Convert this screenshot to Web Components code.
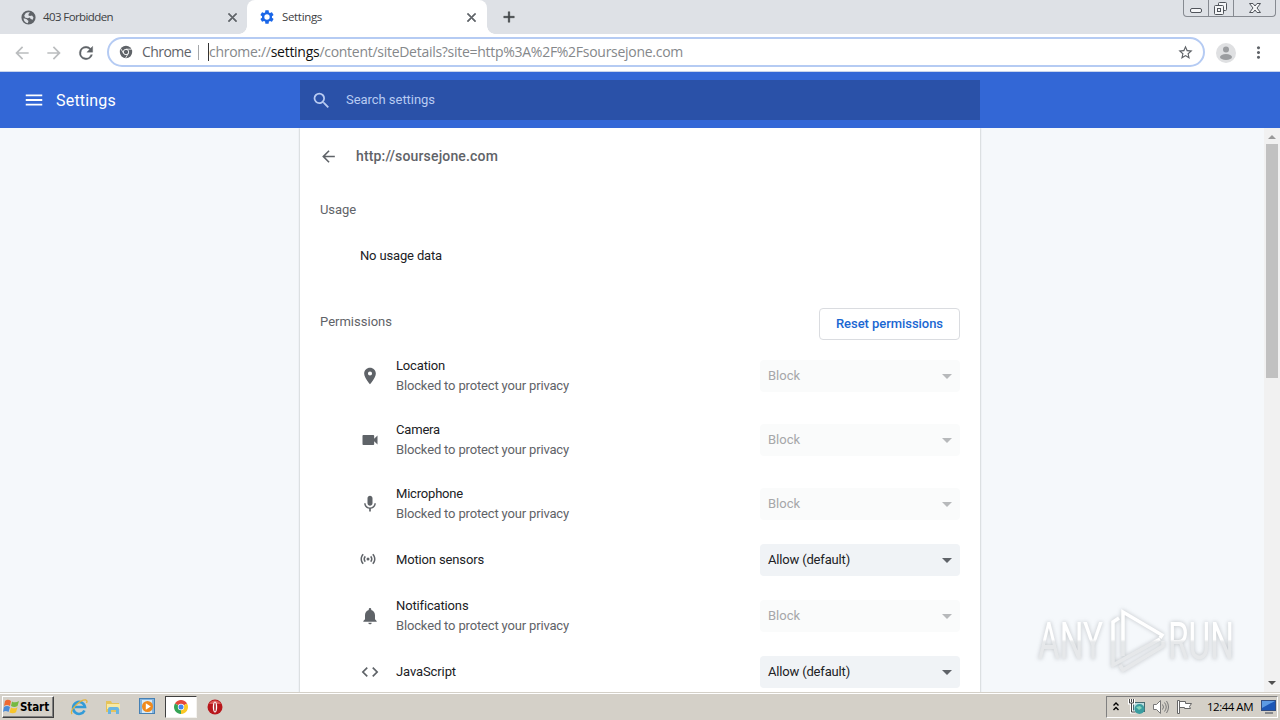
<!DOCTYPE html>
<html lang="en">
<head>
<meta charset="utf-8">
<title>Settings</title>
<style>
  html, body {
    margin: 0;
    width: 1280px;
    height: 720px;
    overflow: hidden;
  }

  body {
    display: flex;
    flex-direction: column;
    font-family: Roboto, "Liberation Sans", sans-serif;
    font-size: 13px;
    background: #fff;
  }
</style>
</head>
<body>
<tab-strip></tab-strip>
<nav-toolbar></nav-toolbar>
<settings-header></settings-header>
<settings-view>
  <settings-page>
    <permission-row icon="location" label="Location" label-width="49" blocked></permission-row>
    <permission-row icon="camera" label="Camera" label-width="44" blocked></permission-row>
    <permission-row icon="mic" label="Microphone" label-width="67" blocked></permission-row>
    <permission-row icon="sensors" label="Motion sensors" label-width="88"></permission-row>
    <permission-row icon="bell" label="Notifications" label-width="72" blocked></permission-row>
    <permission-row icon="code" label="JavaScript" label-width="60"></permission-row>
  </settings-page>
</settings-view>
<task-bar></task-bar>
<water-mark></water-mark>

<script>
const ICONS = {
  back: "M20 11H7.83l5.59-5.59L12 4l-8 8 8 8 1.41-1.41L7.83 13H20v-2z",
  forward: "M12 4l-1.41 1.41L16.17 11H4v2h12.17l-5.58 5.59L12 20l8-8z",
  reload: "M17.65 6.35A7.96 7.96 0 0 0 12 4a8 8 0 1 0 7.73 10h-2.08A6 6 0 1 1 12 6c1.66 0 3.14.69 4.22 1.78L13 11h7V4l-2.35 2.35z",
  close: "M19 6.41L17.59 5 12 10.59 6.41 5 5 6.41 10.59 12 5 17.59 6.41 19 12 13.41 17.59 19 19 17.59 13.41 12z",
  plus: "M19 13h-6v6h-2v-6H5v-2h6V5h2v6h6v2z",
  star: "M22 9.24l-7.19-.62L12 2 9.19 8.63 2 9.24l5.46 4.73L5.82 21 12 17.27 18.18 21l-1.63-7.03L22 9.24zM12 15.4l-3.76 2.27 1-4.28-3.32-2.88 4.38-.38L12 6.1l1.71 4.04 4.38.38-3.32 2.88 1 4.28L12 15.4z",
  more: "M12 8c1.1 0 2-.9 2-2s-.9-2-2-2-2 .9-2 2 .9 2 2 2zm0 2c-1.1 0-2 .9-2 2s.9 2 2 2 2-.9 2-2-.9-2-2-2zm0 6c-1.1 0-2 .9-2 2s.9 2 2 2 2-.9 2-2-.9-2-2-2z",
  menu: "M3 18h18v-2H3v2zm0-5h18v-2H3v2zm0-7v2h18V6H3z",
  search: "M15.5 14h-.79l-.28-.27A6.47 6.47 0 0 0 16 9.5 6.5 6.5 0 1 0 9.5 16c1.61 0 3.09-.59 4.23-1.57l.27.28v.79l5 4.99L20.49 19l-4.99-5zm-6 0C7.01 14 5 11.99 5 9.5S7.01 5 9.5 5 14 7.01 14 9.5 11.99 14 9.5 14z",
  globe: "M12 2a10 10 0 1 0 0 20 10 10 0 0 0 0-20zM8 6c2-1.500 4-1.500 6-1l-2 2v2l2 1 3-1 2 3-1 3-3-1-1-2-3 1-4-1-1-3 2-3zM5 13l4 1 3 3-1 3c-3-.5-6-3-6-7z",
  gear: "M19.43 12.98c.04-.32.07-.64.07-.98s-.03-.66-.07-.98l2.11-1.65c.19-.15.24-.42.12-.64l-2-3.460c-.12-.22-.39-.3-.61-.22l-2.49 1c-.52-.4-1.080-.73-1.690-.98l-.38-2.650C14.460 2.180 14.250 2 14 2h-4c-.25 0-.46.18-.49.42l-.38 2.650c-.61.25-1.170.59-1.690.98l-2.490-1c-.23-.09-.49 0-.61.22l-2 3.460c-.13.22-.07.49.12.64l2.110 1.650c-.04.32-.07.65-.07.98s.03.66.07.98l-2.110 1.650c-.19.15-.24.42-.12.64l2 3.460c.12.22.39.3.61.22l2.490-1c.52.4 1.080.73 1.690.98l.38 2.650c.03.24.24.42.49.42h4c.25 0 .46-.18.49-.42l.38-2.650c.61-.25 1.170-.59 1.690-.98l2.490 1c.23.09.49 0 .61-.22l2-3.460c.12-.22.07-.49-.12-.64l-2.110-1.650zM12 16a4 4 0 1 1 0-8 4 4 0 0 1 0 8z",
  location: "M12 2C8.13 2 5 5.13 5 9c0 5.25 7 13 7 13s7-7.75 7-13c0-3.87-3.13-7-7-7zm0 9.5a2.5 2.5 0 1 1 0-5 2.5 2.5 0 0 1 0 5z",
  camera: "M17 10.5V7c0-.55-.45-1-1-1H4c-.55 0-1 .45-1 1v10c0 .55.45 1 1 1h12c.55 0 1-.45 1-1v-3.500l4 4v-11l-4 4z",
  mic: "M12 14c1.660 0 3-1.340 3-3V5c0-1.660-1.340-3-3-3S9 3.340 9 5v6c0 1.660 1.340 3 3 3zm5.300-3c0 3-2.540 5.100-5.300 5.100S6.700 14 6.700 11H5c0 3.410 2.720 6.230 6 6.720V21h2v-3.280c3.280-.48 6-3.300 6-6.720h-1.700z",
  bell: "M12 22c1.100 0 2-.9 2-2h-4a2 2 0 0 0 2 2zm6-6v-5c0-3.070-1.640-5.640-4.500-6.320V4a1.500 1.500 0 0 0-3 0v.68C7.630 5.360 6 7.920 6 11v5l-2 2v1h16v-1l-2-2z",
  code: "M9.400 16.600L4.800 12l4.600-4.600L8 6l-6 6 6 6 1.400-1.400zm5.200 0l4.600-4.600-4.600-4.600L16 6l6 6-6 6-1.400-1.400z",
  sensors: "M7.760 16.240C6.670 15.160 6 13.660 6 12s.67-3.160 1.760-4.240l1.420 1.420C8.450 9.900 8 10.900 8 12s.45 2.100 1.170 2.830l-1.410 1.410zm8.480 0C17.330 15.160 18 13.660 18 12s-.67-3.160-1.760-4.240l-1.420 1.420C15.550 9.900 16 10.900 16 12s-.45 2.100-1.170 2.830l1.410 1.410zM12 10a2 2 0 1 0 0 4 2 2 0 0 0 0-4zm8 2c0 2.210-.9 4.210-2.350 5.650l1.420 1.420C20.880 17.260 22 14.760 22 12s-1.120-5.260-2.930-7.070l-1.420 1.420C19.100 7.790 20 9.790 20 12zM6.350 6.350L4.930 4.930C3.120 6.740 2 9.240 2 12s1.120 5.260 2.930 7.070l1.420-1.420C4.900 16.210 4 14.210 4 12s.9-4.210 2.350-5.650z"
};

class BaseElement extends HTMLElement {
  constructor() {
    super();
    this.attachShadow({ mode: "open" });
  }

  connectedCallback() {
    this.shadowRoot.innerHTML = `<style>${this.constructor.styles}</style>${this.template()}`;
  }
}

class UiIcon extends BaseElement {
  static get styles() {
    return /* css */`
      :host { display: block; flex: none; }
      svg { display: block; fill: currentColor; }
    `;
  }

  template() {
    const size = this.getAttribute("size") || 20;
    return /* html */`
    <svg width="${size}" height="${size}" viewBox="0 0 24 24">
      <path fill-rule="evenodd" d="${ICONS[this.getAttribute("name")]}"/>
    </svg>`;
  }
}

class TabStrip extends BaseElement {
  static get styles() {
    return /* css */`
      :host {
        display: flex;
        height: 34px;
        flex: none;
        background: #dee1e6;
        font: 11.5px "Open Sans", "Noto Sans", sans-serif;
        color: #3c4043;
      }
      .tab {
        display: flex;
        align-items: center;
        box-sizing: border-box;
        height: 34px;
        width: 247px;
        padding: 0 7px 0 20px;
      }
      .tab.active {
        width: 240px;
        padding: 0 8px 0 12px;
        background: #fff;
        border-radius: 8px 8px 0 0;
        position: relative;
      }
      .tab.active::before,
      .tab.active::after {
        content: "";
        position: absolute;
        bottom: 0;
        width: 8px;
        height: 8px;
      }
      .tab.active::before {
        left: -8px;
        background: radial-gradient(circle at 0 0, transparent 7.5px, #fff 8px);
      }
      .tab.active::after {
        right: -8px;
        background: radial-gradient(circle at 100% 0, transparent 7.5px, #fff 8px);
      }
      fit-text { margin-left: 7px; margin-bottom: 2px; }
      .close { margin-left: auto; color: #5f6368; stroke: #5f6368; }
      .gear { color: #1a66e8; }
      .plus { margin: 8px 0 0 13px; color: #3c4043; stroke: #3c4043; stroke-width: .6; }
      .controls {
        display: flex;
        box-sizing: border-box;
        width: 93px;
        height: 17px;
        margin: 0 4px 0 auto;
        border: 1px solid #868a91;
        border-top: 0;
        border-radius: 0 0 4px 4px;
      }
      .controls svg { display: block; }
    `;
  }

  template() {
    return /* html */`
    <div class="tab">
      <ui-icon name="globe" size="17" style="color:#5f6368"></ui-icon>
      <fit-text w="70" style="margin-left:6px">403 Forbidden</fit-text>
      <ui-icon class="close" name="close" size="15"></ui-icon>
    </div>
    <div class="tab active">
      <ui-icon class="gear" name="gear" size="16"></ui-icon>
      <fit-text w="40">Settings</fit-text>
      <ui-icon class="close" name="close" size="15"></ui-icon>
    </div>
    <ui-icon class="plus" name="plus" size="18"></ui-icon>
    <div class="controls">
      <svg width="91" height="16" fill="#f5f6f8" stroke="#50545b">
        <path d="M24.500 0v16M49.500 0v16" stroke="#868a91"/>
        <rect x="6.500" y="8.500" width="11" height="4" rx="1.500"/>
        <rect x="34.500" y="2.500" width="8" height="8" rx="1"/>
        <rect x="30.500" y="5.500" width="9" height="9" rx="1"/>
        <rect x="33.500" y="8.500" width="3" height="3"/>
        <path d="M65.500 3.500h3.500l2 2.500 2-2.500h3.500l-3.500 4.500 3.500 4.500h-3.500l-2-2.500-2 2.500h-3.500l3.500-4.500z"/>
      </svg>
    </div>`;
  }
}

class NavToolbar extends BaseElement {
  static get styles() {
    return /* css */`
      :host {
        display: flex;
        align-items: center;
        box-sizing: border-box;
        height: 38px;
        flex: none;
        padding: 0 12px;
        background: #fff;
        border-bottom: 1px solid #c9d4ec;
        font: 14px "Open Sans", "Noto Sans", sans-serif;
        color: #5f6368;
      }
      .off { color: #bbbdbf; }
      .omnibox {
        display: flex;
        align-items: center;
        box-sizing: border-box;
        width: 1098px;
        height: 30px;
        margin-left: 12px;
        margin-top: -1px;
        padding: 0 9px 0 10px;
        border: 2px solid #b5cbf3;
        border-radius: 15px;
      }
      .omnibox fit-text { margin-bottom: 1px; }
      .site { margin-left: 9px; }
      .divider { width: 1px; height: 15px; margin: 0 9px 0 7px; background: #a5a7aa; }
      .caret { width: 1px; height: 18px; background: #333; }
      .url { color: #85888b; }
      .url b { font-weight: 400; color: #111; }
      .star { margin-left: auto; }
      .avatar { display: block; margin-left: 11px; }
      .more { margin-left: 13px; }
    `;
  }

  template() {
    return /* html */`
    <ui-icon class="off" name="back"></ui-icon>
    <ui-icon class="off" name="forward" style="margin-left:12px"></ui-icon>
    <ui-icon name="reload" style="margin-left:12px;margin-right:-1px;stroke:currentColor;stroke-width:.4"></ui-icon>
    <div class="omnibox">
      <svg width="14" height="14" viewBox="0 0 14 14">
        <circle cx="7" cy="7" r="6.200" fill="#5f6368"/>
        <circle cx="7" cy="7" r="2.700" fill="#5f6368" stroke="#fff" stroke-width=".9"/>
        <path d="M7 4.200h5.800M4.600 8.400L1.700 3.500M9.400 8.400L6.500 13.200" stroke="#fff" stroke-width=".8"/>
      </svg>
      <fit-text class="site" w="49">Chrome</fit-text>
      <div class="divider"></div>
      <div class="caret"></div>
      <fit-text class="url" w="474">chrome://<b>settings</b>/content/siteDetails?site=http%3A%2F%2Fsoursejone.com</fit-text>
      <ui-icon class="star" name="star" size="17"></ui-icon>
    </div>
    <svg class="avatar" width="20" height="20">
      <circle cx="10" cy="10" r="10" fill="#dfe0e2"/>
      <circle cx="10" cy="6.500" r="3" fill="#9b9da0"/>
      <ellipse cx="10" cy="14" rx="6" ry="3" fill="#9b9da0"/>
    </svg>
    <ui-icon class="more" name="more" size="19"></ui-icon>`;
  }
}

class SettingsHeader extends BaseElement {
  static get styles() {
    return /* css */`
      :host {
        display: flex;
        align-items: center;
        height: 56px;
        flex: none;
        background: #3367d6;
        color: #fff;
      }
      .left {
        display: flex;
        align-items: center;
        box-sizing: border-box;
        width: 300px;
        padding-left: 23px;
        gap: 11px;
        font-size: 16px;
      }
      .search {
        display: flex;
        align-items: center;
        box-sizing: border-box;
        width: 680px;
        height: 40px;
        padding-left: 11px;
        gap: 14px;
        background: #2a51a8;
        color: #b8cbf2;
      }
      .search fit-text { margin-bottom: 2px; }
    `;
  }

  template() {
    return /* html */`
    <div class="left">
      <ui-icon name="menu" size="22"></ui-icon>
      <fit-text w="60">Settings</fit-text>
    </div>
    <div class="search">
      <ui-icon name="search" size="21"></ui-icon>
      <fit-text w="89">Search settings</fit-text>
    </div>`;
  }
}

class SettingsView extends BaseElement {
  static get styles() {
    return /* css */`
      :host {
        display: flex;
        height: 564px;
        flex: none;
        padding-left: 300px;
        background: #f5f8fb;
        overflow: hidden;
      }
      .scrollbar {
        display: flex;
        flex-direction: column;
        align-items: center;
        width: 16px;
        margin-left: auto;
        background: #f1f1f1;
      }
      .thumb { width: 12px; height: 234px; background: #c1c1c1; }
      svg { display: block; }
      .down { margin-top: auto; }
    `;
  }

  template() {
    return /* html */`
    <slot></slot>
    <div class="scrollbar">
      <svg width="16" height="16"><path d="M4 11l4-4 4 4z" fill="#999"/></svg>
      <div class="thumb"></div>
      <svg class="down" width="16" height="16"><path d="M4 5h8l-4 4z" fill="#505050"/></svg>
    </div>`;
  }
}

class SettingsPage extends BaseElement {
  static get styles() {
    return /* css */`
      :host {
        display: block;
        box-sizing: border-box;
        width: 680px;
        height: 620px;
        padding: 0 20px 0 20px;
        background: #fff;
        box-shadow: 0 0 2px rgba(60, 64, 67, .4);
        color: #5f6368;
      }
      .title {
        display: flex;
        align-items: center;
        height: 56px;
        gap: 20px;
        margin-left: -1px;
        font-size: 14px;
        font-weight: 500;
      }
      .title ui-icon { width: 17px; }
      .usage { display: flex; align-items: center; height: 44px; padding-top: 4px; }
      .data {
        display: flex;
        align-items: center;
        height: 48px;
        padding-left: 40px;
        margin-bottom: 24px;
        color: #202124;
      }
      .usage fit-text,
      .data fit-text,
      .reset fit-text { margin-bottom: 2px; }
      .heading { display: flex; justify-content: space-between; height: 40px; }
      .heading > fit-text { margin-top: 10px; }
      .reset {
        display: flex;
        align-items: center;
        justify-content: center;
        box-sizing: border-box;
        width: 141px;
        height: 32px;
        margin-top: 4px;
        border: 1px solid #dadce0;
        border-radius: 4px;
        font-weight: 500;
        color: #1a67d2;
      }
    `;
  }

  template() {
    return /* html */`
    <div class="title"><ui-icon name="back" size="19"></ui-icon><fit-text w="142">http://soursejone.com</fit-text></div>
    <div class="usage"><fit-text w="36">Usage</fit-text></div>
    <div class="data"><fit-text w="82">No usage data</fit-text></div>
    <div class="heading">
      <fit-text w="72">Permissions</fit-text>
      <div class="reset"><fit-text w="107">Reset permissions</fit-text></div>
    </div>
    <slot></slot>`;
  }
}

class PermissionRow extends BaseElement {
  static get styles() {
    return /* css */`
      :host { display: flex; align-items: center; height: 48px; padding-left: 40px; color: #5f6368; }
      :host([blocked]) { height: 64px; }
      :host([icon="sensors"]) { padding-left: 39px; }
      :host([icon="sensors"]) ui-icon { width: 18px; margin-right: 3px; margin-bottom: 2px; }
      .text { display: flex; flex-direction: column; margin-left: 16px; line-height: 20px; }
      .label { color: #202124; }
      .select {
        display: flex;
        align-items: center;
        justify-content: space-between;
        box-sizing: border-box;
        width: 200px;
        height: 32px;
        margin-left: auto;
        padding: 0 8px;
        background: #f0f3f6;
        border-radius: 4px;
        color: #202124;
      }
      .select fit-text { margin-bottom: 2px; }
      :host([blocked]) .select { background: #fafbfb; color: #a6a7a9; }
      .arrow { fill: #5f6368; }
      :host([blocked]) .arrow { fill: #b7b9bb; }
    `;
  }

  template() {
    const blocked = this.hasAttribute("blocked");
    const icon = this.getAttribute("icon");
    return /* html */`
    <ui-icon name="${icon}" size="${icon === "sensors" ? 18 : 20}"></ui-icon>
    <div class="text">
      <fit-text class="label" w="${this.getAttribute("label-width")}">${this.getAttribute("label")}</fit-text>
      ${blocked ? `<fit-text w="173">Blocked to protect your privacy</fit-text>` : ""}
    </div>
    <div class="select">
      <fit-text w="${blocked ? 32 : 82}">${blocked ? "Block" : "Allow (default)"}</fit-text>
      <svg class="arrow" width="10" height="5"><path d="M0 0h10L5 5z"/></svg>
    </div>`;
  }
}

class TaskBar extends BaseElement {
  static get styles() {
    return /* css */`
      :host {
        display: flex;
        align-items: center;
        box-sizing: border-box;
        height: 28px;
        flex: none;
        padding: 0 2px;
        border-top: 1px solid #d4d0c8;
        background: #d4d0c8;
        box-shadow: inset 0 1px #fff;
        font: 11.5px "Open Sans", "Noto Sans", sans-serif;
        color: #000;
      }
      svg { display: block; }
      .start {
        display: flex;
        align-items: center;
        box-sizing: border-box;
        width: 52px;
        height: 22px;
        border: 1px solid;
        border-color: #fff #404040 #404040 #fff;
        box-shadow: inset -1px -1px #808080;
        font: bold 11.5px "DejaVu Sans Condensed", "DejaVu Sans", sans-serif;
      }
      .apps { display: flex; align-items: center; margin-left: 8px; }
      .app {
        display: flex;
        align-items: center;
        justify-content: center;
        box-sizing: border-box;
        width: 34px;
        height: 22px;
      }
      .app.active {
        width: 32px;
        margin: 0 1px;
        background: #fff;
        border: 1px solid;
        border-color: #404040 #f4f2ee #f4f2ee #404040;
      }
      .tray {
        display: flex;
        align-items: center;
        box-sizing: border-box;
        width: 172px;
        height: 22px;
        margin-left: auto;
        padding-left: 5px;
        border: 1px solid;
        border-color: #808080 #fff #fff #808080;
      }
      .tray fit-text { margin-bottom: 1px; }
    `;
  }

  template() {
    return /* html */`
    <div class="start">
      <svg width="17" height="17" viewBox="0 0 17 17">
        <path d="M2 3c2-2 4-1.500 6 0L7 8C5 6.500 3 6.500 1 8z" fill="#ef6a32"/>
        <path d="M9 3.500c2 1.200 4.500 1.200 7-.5l-1.500 5C12 9.500 10 9 8 8z" fill="#75b943"/>
        <path d="M1 9c2-1.500 4-1.500 6 0l-1.500 5c-2-1.500-4-1.300-5.500 0z" fill="#4a8bd8"/>
        <path d="M8 9.500c2 1.200 4 1.200 6.500-.3l-1.500 5c-2 1.500-4.500 1.300-6.500.3z" fill="#f7c52c"/>
      </svg>
      <fit-text w="29">Start</fit-text>
    </div>
    <div class="apps">
      <div class="app">
        <svg width="18" height="18" viewBox="0 0 18 18" fill="none">
          <path d="M14.500 12.500a6 6 0 1 1 .5-3.500H5" stroke="#329bd8" stroke-width="2.600"/>
          <path d="M2 16C-1 12 11 1 16 2c1.500.5 1 2 .5 3" stroke="#e3b33c" stroke-width="1.300"/>
        </svg>
      </div>
      <div class="app">
        <svg width="18" height="18" viewBox="0 0 18 18">
          <path d="M2 3h5l1 2h7v9H2z" fill="#e5c35b"/>
          <path d="M3 6h13v5H3z" fill="#f8e9a3"/>
          <path d="M4 16V11q0-2 2-2h7q2 0 2 2v5h-3v-4H7v4z" fill="#69b5e2"/>
        </svg>
      </div>
      <div class="app">
        <svg width="17" height="17" viewBox="0 0 17 17">
          <rect x=".5" y=".5" width="15" height="15" fill="#85b5df" stroke="#4580b4"/>
          <rect x="3" y="2" width="10" height="13" fill="#d8eaf8"/>
          <circle cx="8.500" cy="8.500" r="5.500" fill="#f08a1d"/>
          <path d="M6.800 5.300v6.400l5-3.200z" fill="#fff"/>
        </svg>
      </div>
      <div class="app active">
        <svg width="14" height="14" viewBox="0 0 14 14">
          <path d="M7 7L.94 3.500a7 7 0 0 1 12.120 0z" fill="#e4483b"/>
          <path d="M7 7L.94 3.500A7 7 0 0 0 7 14z" fill="#35a455"/>
          <path d="M7 7l6.060-3.500A7 7 0 0 1 7 14z" fill="#fbc824"/>
          <circle cx="7" cy="7" r="3.200" fill="#fff"/>
          <circle cx="7" cy="7" r="2.500" fill="#4385ee"/>
        </svg>
      </div>
      <div class="app">
        <svg width="16" height="16" viewBox="0 0 16 16">
          <circle cx="8" cy="8" r="7.500" fill="#b8161b"/>
          <path d="M2 5a7 7 0 0 1 12 0z" fill="#dc5a58"/>
          <ellipse cx="8" cy="8" rx="2.200" ry="5.500" fill="#fff"/>
          <ellipse cx="8" cy="8" rx=".8" ry="4.500" fill="#a31318"/>
        </svg>
      </div>
    </div>
    <div class="tray">
      <svg width="8" height="12" fill="none" stroke="#000" stroke-width="1.400"><path d="M1.500 4.500L4 2l2.500 2.500M1.500 9L4 6.500 6.500 9"/></svg>
      <svg width="18" height="18" viewBox="0 0 18 18" style="margin-left:8px">
        <rect x="5.500" y="4.500" width="11" height="9" fill="#b9dde0" stroke="#476b70"/>
        <path d="M1.500 1v4h4V1M3.500 1v13h4" fill="none" stroke="#fff" stroke-width="3"/>
        <path d="M1.500 1v4h4V1M3.500 5v9h4M3.500 1v3" fill="none" stroke="#444"/>
        <circle cx="11.500" cy="11" r="5" fill="#3a9da0"/>
        <path d="M8 9l4-1 2 2-3 2z" fill="#83d5bb"/>
      </svg>
      <svg width="17" height="16" viewBox="0 0 17 16" fill="none" stroke="#777" style="margin-left:6px">
        <path d="M1.500 5.500h3L8.500 1.500v13l-4-4h-3z" fill="#fff"/>
        <path d="M10.500 5.500q2 2.500 0 5M12.500 3.500q3.500 4.500 0 9M14.500 2q4 6 0 12"/>
      </svg>
      <svg width="17" height="16" viewBox="0 0 17 16" fill="#fff" stroke="#666" style="margin-left:7px">
        <path d="M1.500 1.500h2v13h-2zM3.500 2.500h6v2h6l-2 3 1 2H8.500v-1h-5z"/>
      </svg>
      <fit-text w="46" style="margin-left:14px">12:44 AM</fit-text>
      <svg width="16" height="15" viewBox="0 0 16 15" style="margin-left:8px">
        <rect x=".5" y="1.500" width="14" height="10" fill="#1d57b6" stroke="#344e80"/>
        <path d="M1 2h13L1 9z" fill="#5d9be4"/>
        <path d="M4 14h8" stroke="#6d7179" stroke-width="1.500"/>
      </svg>
    </div>`;
  }
}

// Sits over the page, so it is taken out of the flow
class WaterMark extends BaseElement {
  static get styles() {
    return /* css */`
      :host { display: block; position: absolute; left: 1030px; top: 600px; }
      svg { display: block; filter: drop-shadow(0 0 2px rgba(90, 95, 100, .35)); }
      text { font: 400 51px Roboto, sans-serif; }
    `;
  }

  template() {
    return /* html */`
    <svg width="240" height="84">
      <defs>
        <linearGradient id="fade" gradientUnits="userSpaceOnUse" x1="0" y1="8" x2="0" y2="72">
          <stop offset=".49" stop-color="#fff"/>
          <stop offset=".53" stop-color="#e6e8ea"/>
        </linearGradient>
      </defs>
      <g fill="url(#fade)">
        <text x="8" y="59" textLength="65" lengthAdjust="spacingAndGlyphs">ANY</text>
        <text x="138" y="59" textLength="66" lengthAdjust="spacingAndGlyphs">RUN</text>
      </g>
      <g fill="none" stroke="url(#fade)" stroke-width="3.500">
        <path d="M93 56V12l39 23-2 3"/>
        <path d="M89 18l-6 4v43l47-26"/>
        <path d="M90 65l3 5 40-24v-5"/>
      </g>
    </svg>`;
  }
}

// Tracks its text so the run comes out exactly `w` pixels wide
class FitText extends BaseElement {
  static get styles() {
    return /* css */`
      :host { display: inline-block; flex: none; white-space: nowrap; width: max-content; }
    `;
  }

  template() {
    return `<slot></slot>`;
  }

  connectedCallback() {
    super.connectedCallback();
    const extra = Number(this.getAttribute("w")) - this.getBoundingClientRect().width;
    this.style.letterSpacing = `${extra / this.textContent.length}px`;
  }
}

customElements.define("ui-icon", UiIcon);
customElements.define("tab-strip", TabStrip);
customElements.define("nav-toolbar", NavToolbar);
customElements.define("settings-header", SettingsHeader);
customElements.define("settings-view", SettingsView);
customElements.define("settings-page", SettingsPage);
customElements.define("permission-row", PermissionRow);
customElements.define("task-bar", TaskBar);
customElements.define("water-mark", WaterMark);
customElements.define("fit-text", FitText);
</script>
</body>
</html>
